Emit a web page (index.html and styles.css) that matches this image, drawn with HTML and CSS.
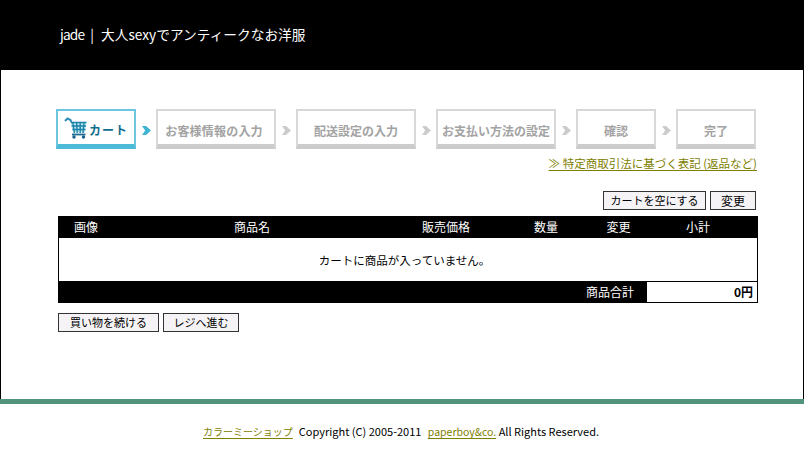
FILE: index.html
```html
<!DOCTYPE html>
<html lang="ja">
<head>
<meta charset="utf-8">
<title>jade | 大人sexyでアンティークなお洋服</title>
<link rel="stylesheet" href="styles.css">
</head>
<body>
<header class="site-header"><a class="logo"><span class="brand">jade</span><span class="sep">|</span>大人sexyでアンティークなお洋服</a></header>
<main class="content">
  <ol class="steps">
    <li class="step step-s current">
      <svg class="cart-icon" width="24" height="22" viewBox="0 0 24 22" aria-hidden="true">
        <path d="M1 4 L3.5 1.5 L6.5 3 L7.5 5.5" fill="none" stroke="#2f8fb5" stroke-width="2"/>
        <path d="M6.5 5.5 L22.5 5.5 L21 15.5 L9 15.5 Z" fill="#bfe6f2"/>
        <path d="M7 5.5 L22.5 5.5 M8.8 5.5 L10.4 16 M12.6 5.5 L13.2 16 M16.2 5.5 L16.2 16 M20 5.5 L19 16 M7.6 9 L22 9 M8.4 12.5 L21.5 12.5" stroke="#1b82a8" stroke-width="1.4" fill="none"/>
        <path d="M8 17.5 L21.5 17.5" stroke="#1c6a94" stroke-width="1.8"/>
        <circle cx="10" cy="20" r="1.7" fill="#1c5f8c"/><circle cx="19.5" cy="20" r="1.7" fill="#1c5f8c"/>
      </svg>
      <span>カート</span>
    </li>
    <li class="arrow arrow-on"></li>
    <li class="step step-l nudge">お客様情報の入力</li>
    <li class="arrow"></li>
    <li class="step step-l">配送設定の入力</li>
    <li class="arrow"></li>
    <li class="step step-l">お支払い方法の設定</li>
    <li class="arrow"></li>
    <li class="step step-s">確認</li>
    <li class="arrow"></li>
    <li class="step step-s">完了</li>
  </ol>
  <p class="law"><a class="link">≫ 特定商取引法に基づく表記 (返品など)</a></p>
  <div class="actions-top">
    <button class="btn btn-empty" type="button">カートを空にする</button>
    <button class="btn btn-update" type="button">変更</button>
  </div>
  <table class="cart">
    <colgroup>
      <col class="c1"><col class="c2"><col class="c3"><col class="c4"><col class="c5"><col class="c6">
    </colgroup>
    <thead>
      <tr><th>画像</th><th>商品名</th><th>販売価格</th><th>数量</th><th>変更</th><th class="last">小計</th></tr>
    </thead>
    <tbody>
      <tr><td class="empty" colspan="6">カートに商品が入っていません。</td></tr>
    </tbody>
    <tfoot>
      <tr><th class="sum-label" colspan="5">商品合計</th><td class="sum-value">0円</td></tr>
    </tfoot>
  </table>
  <div class="actions-bottom">
    <button class="btn btn-continue" type="button">買い物を続ける</button>
    <button class="btn btn-checkout" type="button">レジへ進む</button>
  </div>
</main>
<footer class="site-footer">
  <a class="link shop">カラーミーショップ</a><span class="copy">Copyright (C) 2005-2011 <a class="link paper">paperboy&amp;co.</a> All Rights Reserved.</span>
</footer>
</body>
</html>
```
FILE: styles.css
```css
* { box-sizing: border-box; }
html, body { margin: 0; padding: 0; }
body {
  width: 804px;
  height: 456px;
  overflow: hidden;
  background: #fff;
  color: #000;
  font-family: "Noto Sans CJK JP", "Liberation Sans", sans-serif;
  font-size: 12px;
  line-height: 16px;
}
.site-header {
  height: 70px;
  background: #000;
  padding: 24px 0 0 60px;
}
.logo {
  display: block;
  color: #fff;
  font-size: 13.7px;
  line-height: 20px;
}
.brand { letter-spacing: -0.8px; }
.sep { margin: 0 7px 0 6px; }
.content {
  height: 329px;
  border-left: 1px solid #000;
  border-right: 1px solid #000;
  padding: 39px 46px 0 55px;
}
.steps {
  list-style: none;
  margin: 0;
  padding: 0;
  display: flex;
  height: 40px;
}
.step {
  height: 40px;
  border: 2px solid #d8d8d8;
  border-bottom: 5px solid #ccc;
  display: flex;
  align-items: center;
  justify-content: center;
  color: #a3a3a3;
  font-weight: 700;
  font-size: 12px;
  padding-top: 6px;
  white-space: nowrap;
}
.step-s { width: 80px; }
.step-l { width: 120px; }
.nudge { padding-right: 4px; letter-spacing: 0.2px; }
.step.current {
  border-color: #6cc6de;
  border-bottom-color: #4dbbd8;
  color: #0f6e8b;
  gap: 1px;
  justify-content: flex-start;
  padding-left: 6px;
  padding-top: 0;
}
.cart-icon { flex: none; }
.current span { padding-top: 5px; letter-spacing: 1px; }
.arrow {
  width: 20px;
  position: relative;
}
.arrow::before {
  content: "";
  position: absolute;
  left: 6px;
  top: 17px;
  width: 9px;
  height: 9px;
  background: #ccc;
  clip-path: polygon(0 0, 45% 0, 100% 50%, 45% 100%, 0 100%, 35% 50%);
}
.arrow-on::before { background: #3fb3d3; }
.law {
  margin: 6px 0 0;
  padding: 0;
  text-align: right;
  line-height: 16px;
  width: 701px;
  font-size: 11.5px;
}
.link {
  color: #808000;
  text-decoration: underline;
  text-underline-offset: 2px;
}
.actions-top {
  display: flex;
  justify-content: flex-end;
  gap: 4px;
  margin-top: 20px;
  width: 700px;
}
.btn {
  height: 19px;
  padding: 0;
  margin: 0;
  background: #f5f3f5;
  border: 1px solid #333;
  border-radius: 0;
  color: #000;
  font-family: inherit;
  font-size: 11px;
  line-height: 17px;
}
.btn-empty { width: 103px; }
.btn-update { width: 46px; font-size: 12px; }
.btn-continue { width: 101px; }
.btn-checkout { width: 76px; }
.cart {
  margin: 6px 0 0 2px;
  width: 700px;
  height: 87px;
  border-collapse: separate;
  border-spacing: 0;
  table-layout: fixed;
}
.c1 { width: 56px; }
.c2 { width: 276px; }
.c3 { width: 112px; }
.c4 { width: 88px; }
.c5 { width: 57px; }
.c6 { width: 111px; }
.cart thead tr, .cart tfoot tr { height: 22px; }
.cart thead th {
  background: #000;
  color: #fff;
  font-weight: 400;
  padding: 0;
}
.cart thead th.last { padding-right: 9px; }
.empty {
  height: 43px;
  text-align: center;
  font-size: 11.5px;
  border-left: 1px solid #000;
  border-right: 1px solid #000;
  padding: 0 7px 0 0;
}
.sum-label {
  background: #000;
  color: #fff;
  font-weight: 400;
  text-align: right;
  padding: 0 13px 0 0;
}
.sum-value {
  background: #fff;
  border-top: 1px solid #000;
  border-right: 1px solid #000;
  border-bottom: 1px solid #000;
  font-weight: 700;
  text-align: right;
  padding: 0 4px 0 0;
}
.actions-bottom {
  display: flex;
  gap: 4px;
  margin: 10px 0 0 2px;
}
.site-footer {
  border-top: 5px solid #52937b;
  height: 52px;
  padding-top: 19px;
  padding-left: 203px;
  font-size: 11px;
  line-height: 16px;
  white-space: nowrap;
}
.shop { font-size: 10px; }
.copy { margin-left: 6px; }
.paper { font-size: 10.5px; margin-left: 4px; }
```
